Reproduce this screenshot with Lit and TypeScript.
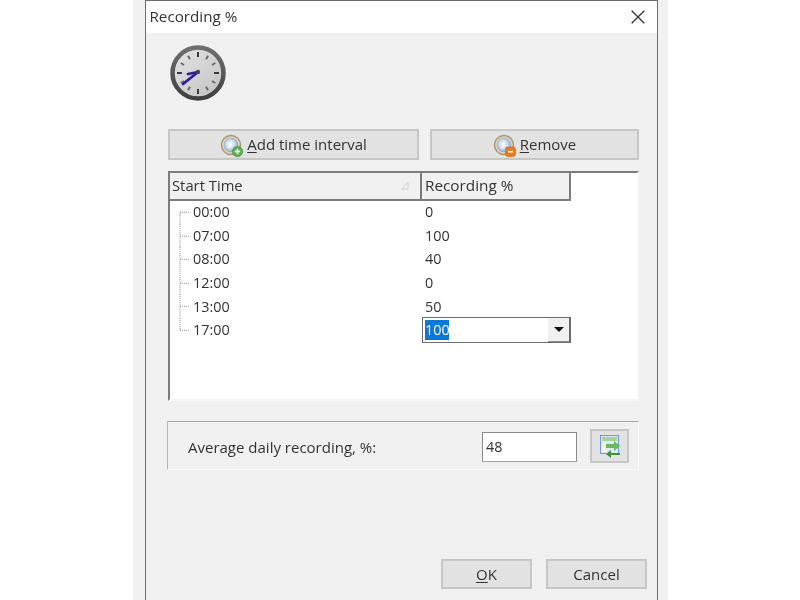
import { LitElement, html, css, svg } from "lit";
import { customElement } from "lit/decorators.js";

const rows = [
  ["00:00", "0", "first"],
  ["07:00", "100", "mid"],
  ["08:00", "40", "mid"],
  ["12:00", "0", "mid"],
  ["13:00", "50", "mid"],
  ["17:00", "100", "last"],
];

const branch = (kind: string) => svg`<svg class="branch" width="22" height="24" viewBox="0 0 22 24">
  <path d="${kind === "first" ? "M10 15V13.500Q10 12 12 12" : kind === "last" ? "M10 0V12H12" : "M10 0V24"}" stroke="#8a8a8a" stroke-dasharray="1 1" fill="none"/>
  <path d="M10 12.500H20" stroke="#8a8a8a" stroke-dasharray="1 1" fill="none"/>
  ${kind === "first" ? svg`<path d="M10 15V24" stroke="#8a8a8a" stroke-dasharray="1 1" fill="none"/>` : ""}
</svg>`;

const discIcon = (id: string, badge: unknown) => html`<svg class="disc" width="24" height="24" viewBox="0 0 24 24">
  <defs><radialGradient id=${id} cx="45%" cy="45%" r="60%"><stop offset="0" stop-color="#ffffff"/><stop offset="0.55" stop-color="#c5d6ea"/><stop offset="1" stop-color="#87a3c9"/></radialGradient></defs>
  <circle cx="11" cy="11" r="9.500" fill="#e3d9bf" stroke="#ab9870" stroke-width="1.500"/>
  <circle cx="11" cy="11" r="7" fill="url(#${id})" stroke="#8fa3bf" stroke-width=".6"/>
  <path d="M11 8V11L9 14" stroke="#fff" stroke-width="1.400" fill="none"/>
  ${badge}
</svg>`;

const plusBadge = svg`<circle cx="17.500" cy="17.500" r="5.200" fill="#5cae55" stroke="#3f8f3c" stroke-width=".6"/><path d="M17.500 14.800v5.400M14.800 17.500h5.400" stroke="#fff" stroke-width="1.600"/>`;
const minusBadge = svg`<rect x="12.500" y="13" width="10" height="9.500" rx="2.500" fill="#ec7a1f" stroke="#c95f10" stroke-width=".6"/><path d="M15 17.700h5" stroke="#fff" stroke-width="1.600"/>`;

const ticks = [0, 30, 60, 90, 120, 150, 180, 210, 240, 270, 300, 330];

@customElement("app-root")
export class AppRoot extends LitElement {
  static styles = css`
    :host {
      display: block;
      width: 800px;
      height: 600px;
      overflow: hidden;
      background: #fff;
      font-family: "Open Sans", "Noto Sans", sans-serif;
      font-size: 14.400px;
      color: #333;
    }
    .backdrop {
      width: 535px;
      height: 600px;
      margin-left: 133px;
      padding-left: 12px;
      box-sizing: border-box;
      background: #f1f1f1;
      filter: blur(0.5px);
    }
    .window {
      width: 513px;
      height: 600px;
      box-sizing: border-box;
      border: 1.500px solid #6d6d6d;
      border-bottom: 0;
      background: #f0f0f0;
      display: flex;
      flex-direction: column;
    }
    .title {
      height: 32px;
      flex: none;
      background: #fff;
      display: flex;
      align-items: center;
      justify-content: space-between;
      padding: 0 12px 2px 3.500px;
      box-sizing: border-box;
      font-size: 15.200px;
    }
    .close { display: block; margin-top: 2px; }
    .client {
      flex: 1;
      position: relative;
      padding: 11px 18px 0 22px;
      display: flex;
      flex-direction: column;
    }
    .clock { display: block; margin-left: 1px; }
    .actions {
      display: flex;
      gap: 11px;
      margin-top: 27px;
      width: 471px;
    }
    .btn {
      height: 31px;
      box-sizing: border-box;
      border: 2px solid #c6c6c6;
      background: #e2e2e2;
      display: flex;
      align-items: center;
      justify-content: center;
      font-size: 15px;
      color: #333;
    }
    .actions .btn span { margin-top: -2px; }
    .btn u { text-underline-offset: 2px; }
    .add { width: 251px; }
    .remove { width: 209px; }
    .disc { margin-right: 3px; margin-top: 2px; }
    .list {
      width: 471px;
      height: 230px;
      box-sizing: border-box;
      margin-top: 11px;
      background: #fff;
      border-top: 2px solid #7c7c7c;
      border-left: 2px solid #7c7c7c;
      border-right: 2px solid #f7f7f7;
      border-bottom: 2px solid #f7f7f7;
    }
    .head {
      display: flex;
      width: 399px;
      height: 26px;
      border-bottom: 2px solid #7c7c7c;
      border-right: 2px solid #7c7c7c;
      background: #f0f0f0;
      font-size: 14.800px;
    }
    .head div {
      display: flex;
      align-items: center;
      box-sizing: border-box;
      padding-left: 2px;
      padding-bottom: 2px;
    }
    .col1 { width: 252px; border-right: 2px solid #7c7c7c; justify-content: space-between; }
    .head .col2 { flex: 1; font-size: 15.300px; padding-left: 3px; }
    .sort { margin-right: 10px; }
    .body { margin-top: -1px; position: relative; }
    .row {
      display: flex;
      height: 23.600px;
      align-items: center;
    }
    .tree {
      width: 253px;
      flex: none;
      display: flex;
      align-items: center;
    }
    .branch { display: block; margin-right: 1px; height: 23.600px; }
    .val { padding-left: 2px; }
    .combo {
      margin-left: -1px;
      width: 149px;
      height: 26px;
      box-sizing: border-box;
      border: 1.500px solid #6b6b6b;
      border-right-width: 2.500px;
      background: #fff;
      display: flex;
      align-items: center;
      justify-content: space-between;
      padding-left: 2px;
    }
    .sel {
      background: #0a78d7;
      color: #fff;
      height: 20px;
      line-height: 20px;
      width: 24px;
      overflow: hidden;
    }
    .drop {
      width: 21px;
      height: 100%;
      background: #f0f0f0;
      border-bottom: 1.500px solid #8a8a8a;
      box-sizing: border-box;
      display: flex;
      align-items: center;
      justify-content: center;
    }
    .group {
      width: 472px;
      height: 49px;
      margin: 20px 0 0 -1px;
      box-sizing: border-box;
      border-top: 1.500px solid #a5a5a5;
      border-left: 1.500px solid #b5b5b5;
      border-right: 1.500px solid #fafafa;
      border-bottom: 1.500px solid #fafafa;
      display: flex;
      align-items: center;
      padding-left: 20px;
      font-size: 15px;
    }
    .label { flex: 1; padding-top: 3px; }
    .field {
      width: 95px;
      height: 30px;
      box-sizing: border-box;
      border: 1.500px solid #8a8a8a;
      border-bottom-color: #a0a0a0;
      background: #fff;
      display: flex;
      align-items: center;
      padding-left: 3px;
      margin-top: 2px;
      font-size: 14.400px;
    }
    .iconbtn {
      width: 39px;
      height: 34px;
      box-sizing: border-box;
      margin: 0 9px 0 13px;
      border: 2px solid #c6c6c6;
      background: #e2e2e2;
      display: flex;
      align-items: center;
      justify-content: center;
    }
    .footer {
      position: absolute;
      right: 10px;
      bottom: 11px;
      display: flex;
      gap: 14px;
    }
    .ok { width: 91px; height: 30px; }
    .cancel { width: 101px; height: 30px; }
  `;

  render() {
    return html`<div class="backdrop"><div class="window">
      <div class="title">
        <span>Recording %</span>
        <svg class="close" width="14" height="14" viewBox="0 0 14 14"><path d="M.7 .7L13.300 13.300M13.300 .7L.7 13.300" stroke="#333" stroke-width="1.300"/></svg>
      </div>
      <div class="client">
        <svg class="clock" width="58" height="58" viewBox="0 0 58 58">
          <defs>
            <linearGradient id="face" x1="0" y1="0" x2="1" y2="1"><stop offset="0" stop-color="#e6e6e6"/><stop offset="1" stop-color="#c0c0c0"/></linearGradient>
            <linearGradient id="rim" x1="0" y1="0" x2="0" y2="1"><stop offset="0" stop-color="#6f6f6f"/><stop offset="1" stop-color="#3f3f3f"/></linearGradient>
          </defs>
          <circle cx="29" cy="29" r="25.500" fill="url(#face)" stroke="url(#rim)" stroke-width="4.500"/>
          ${ticks.map((a) => svg`<rect x="28" y="${a % 90 === 0 ? 8 : 9}" width="2" height="${a % 90 === 0 ? 5 : 4}" fill="${a % 90 === 0 ? "#3a3a3a" : "#6a6a6a"}" transform="rotate(${a} 29 29)"/>`)}
          <path d="M29 28L14 40" stroke="#2a1f9c" stroke-width="2.800" stroke-linecap="round"/>
          <path d="M29 28L19 30" stroke="#2a1f9c" stroke-width="2.800" stroke-linecap="round"/>
          <circle cx="29" cy="28" r="2.200" fill="#444"/>
        </svg>
        <div class="actions">
          <div class="btn add">${discIcon("d1", plusBadge)}<span><u>A</u>dd time interval</span></div>
          <div class="btn remove">${discIcon("d2", minusBadge)}<span><u>R</u>emove</span></div>
        </div>
        <div class="list">
          <div class="head">
            <div class="col1"><span>Start Time</span>
              <svg class="sort" width="9" height="9" viewBox="0 0 9 9"><path d="M7 1L1 8H7Z" fill="#f4f4f4" stroke="#c4c4c4" stroke-width=".8"/></svg>
            </div>
            <div class="col2">Recording %</div>
          </div>
          <div class="body">
            ${rows.map(([t, v, k], i) => html`<div class="row">
              <div class="tree">${branch(k)}<span>${t}</span></div>
              ${i === 5
                ? html`<div class="combo"><span class="sel">${v}</span><span class="drop"><svg width="10" height="5" viewBox="0 0 10 5"><path d="M0 0H10L5 5Z" fill="#111"/></svg></span></div>`
                : html`<div class="val">${v}</div>`}
            </div>`)}
          </div>
        </div>
        <div class="group">
          <span class="label">Average daily recording, %:</span>
          <div class="field">48</div>
          <div class="iconbtn">
            <svg width="26" height="26" viewBox="0 0 26 26">
              <rect x="3.500" y="2.500" width="18" height="18" fill="#dceaf8" stroke="#6d97d6"/>
              <rect x="5" y="4" width="15" height="4" fill="#a6d496"/>
              <rect x="5" y="10" width="5" height="9" fill="#f4f0d8"/>
              <path d="M9 11H17V8L23 13L17 18V15H9Z" fill="#6bb660"/>
              <path d="M23 20H14V17L9 21L14 25V22H23Z" fill="#3f8f3c"/>
            </svg>
          </div>
        </div>
        <div class="footer">
          <div class="btn ok"><span><u>O</u>K</span></div>
          <div class="btn cancel"><span>Cancel</span></div>
        </div>
      </div>
    </div></div>`;
  }
}
